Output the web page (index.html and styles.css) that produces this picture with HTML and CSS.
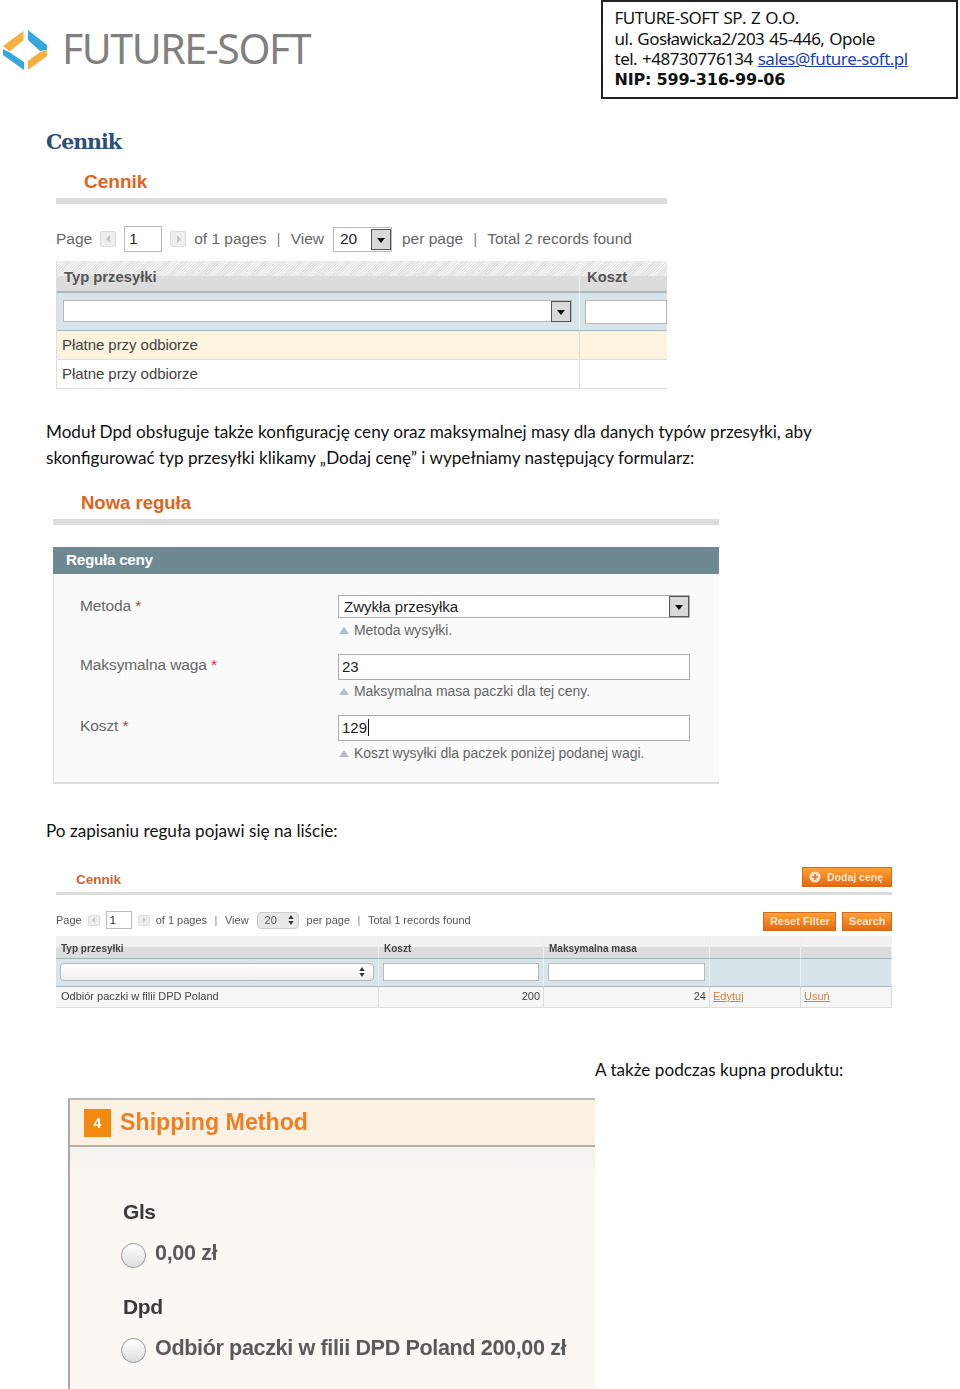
FILE: index.html
```html
<!DOCTYPE html>
<html lang="pl">
<head>
<meta charset="utf-8">
<title>Cennik</title>
<link rel="stylesheet" href="styles.css">
</head>
<body>
<header class="top">
  <div class="brand">
    <svg class="logo" viewBox="0 0 48 42" width="48" height="42" aria-hidden="true">
      <polygon points="3,17 23.5,2 23.5,11 9.5,22.5" fill="#f5b13d"/>
      <polygon points="3,20 9,23 24,33 24,41 3,26" fill="#35a7df"/>
      <polygon points="28,1 47,16 47,21 40,22 28,11" fill="#35a7df"/>
      <polygon points="47,21 47,27 28,41 28,32 40,23" fill="#f5b13d"/>
    </svg>
    <span class="brand-name">FUTURE-SOFT</span>
  </div>
  <address class="company">
    <div>FUTURE-SOFT SP. Z O.O.</div>
    <div>ul. Gosławicka2/203 45-446, Opole</div>
    <div>tel. +48730776134 <a href="#">sales@future-soft.pl</a></div>
    <div class="nip">NIP: 599-316-99-06</div>
  </address>
</header>

<h1 class="doc-title">Cennik</h1>

<section class="shot shot-one">
  <h2 class="page-title">Cennik</h2>
  <div class="rule"></div>
  <div class="pager">
    <span>Page</span><i class="pg-btn prev"></i><span class="pg-input">1</span><i class="pg-btn next"></i>
    <span>of 1 pages</span><span class="sep">|</span><span>View</span>
    <span class="pg-select"><span>20</span><b class="sel-arrow"></b></span>
    <span>per page</span><span class="sep">|</span><span>Total 2 records found</span>
  </div>
  <div class="grid grid-one">
    <div class="g-head">Typ przesyłki</div><div class="g-head">Koszt</div>
    <div class="g-filter"><span class="g-select"><b class="sel-arrow"></b></span></div><div class="g-filter"><span class="g-input"></span></div>
    <div class="g-row hl">Płatne przy odbiorze</div><div class="g-row hl"></div>
    <div class="g-row">Płatne przy odbiorze</div><div class="g-row"></div>
  </div>
</section>

<p class="para para-one">Moduł Dpd obsługuje także konfigurację ceny oraz maksymalnej masy dla danych typów przesyłki, aby skonfigurować typ przesyłki klikamy „Dodaj cenę” i wypełniamy następujący formularz:</p>

<section class="shot shot-two">
  <h2 class="page-title">Nowa reguła</h2>
  <div class="rule"></div>
  <div class="fs-head">Reguła ceny</div>
  <div class="fs-body">
    <div class="f-row">
      <label class="f-label">Metoda <em>*</em></label>
      <div class="f-value">
        <div class="f-field f-select"><span>Zwykła przesyłka</span><b class="sel-arrow"></b></div>
        <p class="f-note">Metoda wysyłki.</p>
      </div>
    </div>
    <div class="f-row">
      <label class="f-label">Maksymalna waga <em>*</em></label>
      <div class="f-value">
        <div class="f-field">23</div>
        <p class="f-note">Maksymalna masa paczki dla tej ceny.</p>
      </div>
    </div>
    <div class="f-row">
      <label class="f-label">Koszt <em>*</em></label>
      <div class="f-value">
        <div class="f-field"><span class="caret">129</span></div>
        <p class="f-note">Koszt wysyłki dla paczek poniżej podanej wagi.</p>
      </div>
    </div>
  </div>
</section>

<p class="para para-two">Po zapisaniu reguła pojawi się na liście:</p>

<section class="shot shot-three">
  <div class="title-row">
    <h2 class="page-title small">Cennik</h2>
    <span class="btn btn-add"><svg viewBox="0 0 12 12" width="12" height="12" aria-hidden="true"><circle cx="6" cy="6" r="5.5" fill="#fbe3cf"/><path d="M6 3v6M3 6h6" stroke="#e8762a" stroke-width="1.6"/></svg>Dodaj cenę</span>
  </div>
  <div class="rule thin"></div>
  <div class="toolbar">
    <div class="pager tiny">
      <span>Page</span><i class="pg-btn prev"></i><span class="pg-input">1</span><i class="pg-btn next"></i>
      <span>of 1 pages</span><span class="sep">|</span><span>View</span>
      <span class="pill"><span>20</span><svg viewBox="0 0 6 10" width="6" height="10" aria-hidden="true"><path d="M3 0l2.6 4H.4zM3 10L.4 6h5.2z" fill="#333"/></svg></span>
      <span>per page</span><span class="sep">|</span><span>Total 1 records found</span>
    </div>
    <div class="btns"><span class="btn">Reset Filter</span><span class="btn">Search</span></div>
  </div>
  <div class="grid grid-three">
    <div class="g-head">Typ przesyłki</div><div class="g-head">Koszt</div><div class="g-head">Maksymalna masa</div><div class="g-head"></div><div class="g-head"></div>
    <div class="g-filter"><span class="g-select round"><svg viewBox="0 0 6 10" width="6" height="10" aria-hidden="true"><path d="M3 0l2.6 4H.4zM3 10L.4 6h5.2z" fill="#333"/></svg></span></div>
    <div class="g-filter"><span class="g-input"></span></div>
    <div class="g-filter"><span class="g-input"></span></div>
    <div class="g-filter"></div><div class="g-filter"></div>
    <div class="g-row">Odbiór paczki w filii DPD Poland</div><div class="g-row num">200</div><div class="g-row num">24</div><div class="g-row link"><a href="#">Edytuj</a></div><div class="g-row link"><a href="#">Usuń</a></div>
  </div>
</section>

<p class="para para-three">A także podczas kupna produktu:</p>

<section class="shipping">
  <div class="ship-head"><span class="step">4</span><h2>Shipping Method</h2></div>
  <div class="ship-body">
    <h3>Gls</h3>
    <div class="ship-opt"><i class="radio"></i><span>0,00 zł</span></div>
    <h3>Dpd</h3>
    <div class="ship-opt"><i class="radio"></i><span>Odbiór paczki w filii DPD Poland 200,00 zł</span></div>
  </div>
</section>
</body>
</html>
```
FILE: styles.css
```css
* { box-sizing: border-box; }
html, body { margin: 0; padding: 0; }
body { width: 960px; height: 1389px; overflow: hidden; background: #fff; font-family: "Liberation Sans", Arial, sans-serif; color: #333; }
h1, h2, h3, p, address { margin: 0; font-style: normal; }

.top { display: flex; justify-content: space-between; align-items: flex-start; height: 99px; padding-right: 2px; }
.brand { display: flex; align-items: center; padding-top: 26px; }
.logo { display: block; }
.brand-name { margin: 0 0 4px 14px; font: 400 41px/44px "Noto Sans", sans-serif; color: #808080; letter-spacing: -1.45px; }
.company { width: 357px; height: 99px; border: 2px solid #222; padding: 6px 0 0 11.5px; font: 400 17px/20.5px "Noto Sans", sans-serif; font-kerning: none; letter-spacing: -.5px; word-spacing: 1px; color: #111; }
.company a { color: #1f3fb0; text-decoration: underline; }
.nip { font-family: "DejaVu Sans", sans-serif; font-weight: 700; font-size: 16px; letter-spacing: -.2px; word-spacing: 0; }

.doc-title { margin: 28px 0 0 46px; font: 700 20.5px/30px "DejaVu Serif", serif; color: #2c5078; letter-spacing: -1.05px; }

.shot { color: #555; }
.page-title { font-size: 19px; line-height: 24px; font-weight: 700; color: #e0641c; }
.rule { height: 6px; background: #ddd; }

.shot-one { width: 611px; margin: 13px 0 0 56px; }
.shot-one .page-title { margin-left: 28px; margin-bottom: 4px; }

.pager { display: flex; align-items: center; gap: 8px; font-size: 15.5px; color: #666; height: 26px; margin-top: 22px; }
.sep { margin: 0 2px; color: #888; }
.pg-btn { position: relative; width: 16px; height: 16px; background: #eee; border: 1px solid #ddd; border-radius: 2px; }
.pg-btn.prev::after, .pg-btn.next::after { content: ""; position: absolute; top: 3px; border: 4px solid transparent; }
.pg-btn.prev::after { left: 1px; border-right-color: #c4c4c4; }
.pg-btn.next::after { left: 6px; border-left-color: #c4c4c4; }
.pg-input { width: 38px; height: 26px; border: 1px solid #bbb; padding: 3px 4px; color: #222; font-size: 15px; }
.pg-select { display: flex; align-items: center; justify-content: space-between; width: 59px; height: 25px; border: 1px solid #bbb; padding-left: 6px; color: #222; margin: 0 2px 0 1px; }
.sel-arrow { position: relative; display: block; width: 20px; height: 21px; background: #d9d9d9; border: 1px solid #555; flex: none; }
.sel-arrow::after { content: ""; position: absolute; left: 5px; top: 8px; border: 4px solid transparent; border-top: 5px solid #111; border-bottom: 0; }

.grid { display: grid; }
.grid-one { grid-template-columns: 523px 87px; grid-template-rows: 32px 38px 29px 29px; margin-top: 9px; border-left: 1px solid #ddd; }
.g-head { background: linear-gradient(transparent 50%, #dcdcdc 50%), repeating-linear-gradient(135deg, #f4f4f4 0 1px, #e2e2e2 1px 2px); border-right: 1px solid #eee; border-bottom: 2px solid #a9b9bf; font-size: 14.8px; font-weight: 700; color: #555; padding: 8px 7px 0; }
.g-filter { background: #d7e4e9; border-right: 1px solid #eef3f5; border-bottom: 1px solid #a9b9bf; padding: 7px 7px 7px 6px; display: flex; }
.g-row { background: #fff; border-right: 1px solid #ddd; border-bottom: 1px solid #ddd; font-size: 15px; letter-spacing: -.05px; color: #444; padding: 5px 5px 0; }
.g-row.hl { background: #fbf3de; }
.g-select { flex: 1; display: flex; justify-content: flex-end; align-items: center; background: #fff; border: 1px solid #b9b9b9; height: 22px; }
.g-input { flex: 1; height: 24px; background: #fff; border: 1px solid #b9b9b9; }
.grid-one > :nth-child(2n) { border-right: 0; }
.grid-one .g-filter:nth-child(4) { padding: 7px 0 7px 5px; }

.para { font: 400 17.15px/26px "Lato", sans-serif; color: #111; }
.para-one { margin: 30px 130px 0 46px; }
.para-two { margin: 34px 0 0 46px; }
.para-three { margin: 49px 0 0 595px; }

.shot-two { width: 666px; margin: 20px 0 0 53px; }
.shot-two .page-title { margin-left: 28px; margin-bottom: 4px; font-size: 18.5px; }
.fs-head { margin-top: 22px; height: 27px; background: #6f8992; color: #fff; font-size: 15.3px; font-weight: 700; letter-spacing: -.3px; line-height: 26px; padding-left: 13px; }
.fs-body { height: 210px; background: #fafafa; border-left: 1px solid #ddd; border-bottom: 2px solid #ddd; padding: 21px 29px 0 26px; }
.f-row { display: flex; height: 61px; }
.f-row:first-child { height: 59px; }
.f-label { width: 258px; font-size: 15.5px; line-height: 22px; color: #666; letter-spacing: -.1px; }
.f-label em { color: #c4323c; font-style: normal; }
.f-value { flex: 1; }
.f-field { height: 26px; background: #fff; border: 1px solid #aaa; font-size: 15px; line-height: 24px; color: #222; padding-left: 3px; }
.f-select { display: flex; justify-content: space-between; align-items: center; height: 23px; padding-left: 5px; }
.f-note { position: relative; margin-top: 3px; padding-left: 16px; font-size: 14px; line-height: 18px; color: #666; letter-spacing: -.05px; }
.f-note::before { content: ""; position: absolute; left: 1px; top: 6px; border: 5px solid transparent; border-top: 0; border-bottom: 7px solid #b4bec4; }
.caret { border-right: 1px solid #111; padding-right: 1px; }
.f-row:nth-child(2) .f-note { margin-top: 2px; }

.shot-three { width: 836px; margin: 23px 0 0 56px; filter: blur(.3px); }
.title-row { display: flex; justify-content: space-between; align-items: flex-start; height: 24px; }
.page-title.small { align-self: flex-end; font-size: 13.5px; line-height: 20px; margin: 0 0 1px 20px; color: #c8642e; }
.rule.thin { height: 3px; margin-top: 1px; background: #d8dcdc; }
.btn { display: inline-flex; align-items: center; gap: 6px; height: 19px; padding: 0 5.5px; background: linear-gradient(#ffa033, #e56a10); border: 1px solid #cf6a20; color: #ffe8d6; font-size: 11px; font-weight: 700; white-space: nowrap; }
.btn-add { width: 90px; height: 20px; font-size: 10.5px; padding-left: 6px; }
.toolbar { display: flex; justify-content: space-between; align-items: center; height: 20px; margin-top: 16px; }
.pager.tiny { height: 20px; margin: 0; padding-bottom: 2px; font-size: 11px; gap: 6px; color: #555; }
.tiny .sep { margin: 0 1.5px; }
.tiny .pg-btn { width: 12px; height: 11px; }
.tiny .pg-btn::after { top: 1.5px; border-width: 3px; }
.tiny .pg-btn.next::after { left: 4px; }
.tiny .pg-btn.prev::after { left: 0; }
.tiny .pg-input { width: 26px; height: 18px; font-size: 11px; padding: 2px 3px; }
.pill { display: flex; align-items: center; justify-content: space-between; width: 42px; height: 17px; margin: 0 2px; padding: 0 4px 0 7px; border: 1px solid #ccc; border-radius: 4px; background: #e8e8e8; }
.btns { display: flex; gap: 6px; }
.grid-three { grid-template-columns: 323px 165px 166px 91px 91px; grid-template-rows: 23px 28px 21px; margin-top: 5px; border-left: 0; }
.grid-three .g-head { font-size: 10px; padding: 7px 5px 0; background: linear-gradient(#f1f1f1 50%, #dcdcdc 50%); border-bottom: 1px solid #9fb3ba; color: #444; }
.grid-three .g-filter { padding: 4px 4px 5px; background: #d7e4e9; }
.grid-three .g-input { height: 18px; }
.g-select.round { height: 18px; border-radius: 4px; padding-right: 8px; background: linear-gradient(#fff, #eee); }
.grid-three .g-row { font-size: 11px; padding: 3px 3px 0 5px; background: #f6f6f6; letter-spacing: 0; }
.g-row.num { text-align: right; }
.grid-three .g-row.link { padding-left: 3px; }
.g-row a { color: #d4803c; }

.shipping { width: 527px; height: 292px; margin: 15px 0 0 68px; border-left: 2px solid #aaa; border-top: 2px solid #bbb; background: #fbf8f3; filter: blur(.4px); }
.ship-head { display: flex; align-items: center; gap: 9px; height: 47px; padding-left: 14px; background: #fbf1e3; border-bottom: 2px solid #b9aca0; }
.step { width: 27px; height: 28px; background: #f28a10; color: #fff; font-size: 14px; font-weight: 700; text-align: center; line-height: 29px; }
.ship-head h2 { font-size: 23.2px; font-weight: 700; color: #ee7f22; }
.ship-body { padding: 53px 0 0 53px; height: 243px; background: linear-gradient(#f3f2ee, #fbf8f3 30px); }
.ship-body h3 { font-size: 21px; line-height: 24px; font-weight: 700; color: #3a3a3a; letter-spacing: -.4px; }
.ship-opt { display: flex; align-items: center; gap: 9px; height: 28px; margin: 15px 0 28px; font-size: 21.6px; font-weight: 700; color: #5a5a5a; letter-spacing: -.38px; }
.radio { width: 25px; height: 25px; border: 1px solid #999; border-radius: 50%; background: linear-gradient(#fff, #ddd); margin: 4px 0 0 -2px; }
```
